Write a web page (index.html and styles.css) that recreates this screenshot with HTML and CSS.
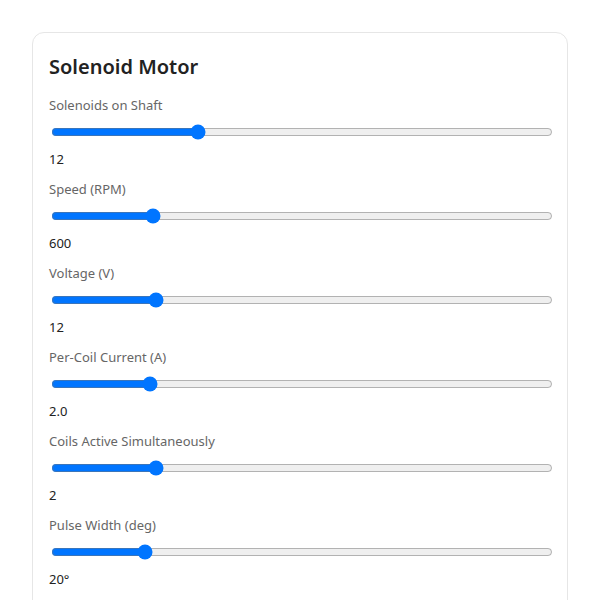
FILE: index.html
```html
<!DOCTYPE html>
<html lang="en">
<head>
    <meta charset="UTF-8">
    <meta name="viewport" content="width=device-width, initial-scale=1.0">
    <title>Solenoid Motor</title>
    <link rel="stylesheet" href="styles.css">
</head>
<body>

<div class="panel">
    <h2 class="panel-title">Solenoid Motor</h2>

    <div class="field">
        <label for="solenoids">Solenoids on Shaft</label>
        <input type="range" id="solenoids" min="4" max="32" step="1" value="12">
        <div class="value" id="solenoidsVal">12</div>
    </div>

    <div class="field">
        <label for="rpm">Speed (RPM)</label>
        <input type="range" id="rpm" min="50" max="2900" step="10" value="600">
        <div class="value" id="rpmVal">600</div>
    </div>

    <div class="field">
        <label for="voltage">Voltage (V)</label>
        <input type="range" id="voltage" min="6" max="36" step="1" value="12">
        <div class="value" id="voltageVal">12</div>
    </div>

    <div class="field">
        <label for="current">Per-Coil Current (A)</label>
        <input type="range" id="current" min="0.5" max="8.5" step="0.1" value="2.0">
        <div class="value" id="currentVal">2.0</div>
    </div>

    <div class="field">
        <label for="coils">Coils Active Simultaneously</label>
        <input type="range" id="coils" min="1" max="6" step="1" value="2">
        <div class="value" id="coilsVal">2</div>
    </div>

    <div class="field">
        <label for="pulse">Pulse Width (deg)</label>
        <input type="range" id="pulse" min="5" max="90" step="1" value="20">
        <div class="value" id="pulseVal">20°</div>
    </div>
</div>

</body>
</html>
```

FILE: styles.css
```css
body {
    font-family: "Noto Sans", "Open Sans", sans-serif;
    background-color: #fff;
    color: #222;
    margin: 0;
    padding: 32px;
}

.panel {
    background-color: #fff;
    border: 1px solid #e6e6e6;
    border-radius: 12px;
    padding: 16px 16px 20px;
}

.panel-title {
    font-size: 20px;
    font-weight: 600;
    line-height: 28px;
    margin: 4px 0 14px;
}

.field {
    margin-bottom: 10px;
}

label {
    display: block;
    font-size: 13px;
    line-height: 20px;
    color: #666;
}

input[type="range"] {
    display: block;
    width: 100%;
    margin: 9px 2px 9px;
}

.value {
    font-size: 13px;
    line-height: 20px;
    color: #222;
}
```
